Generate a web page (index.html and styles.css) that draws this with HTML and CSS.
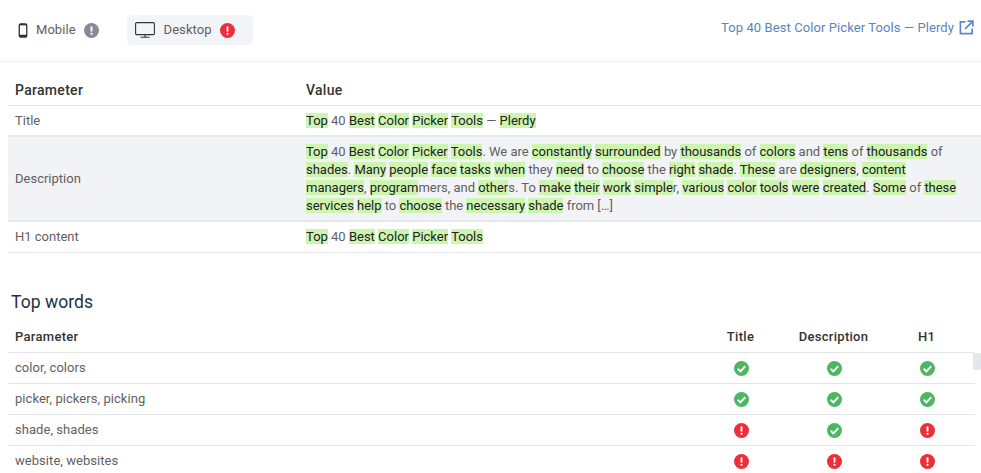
FILE: index.html
```html
<!DOCTYPE html>
<html lang="en">

<head>
    <meta charset="UTF-8">
    <title>Top words</title>
    <link rel="stylesheet" href="styles.css">
</head>

<body>
    <svg class="defs">
        <symbol id="ok" viewBox="0 0 16 16">
            <circle cx="8" cy="8" r="8" fill="#4cb662"></circle>
            <path d="M4 8.3l2.8 2.7L12 5.6" fill="none" stroke="#fff" stroke-width="2"></path>
        </symbol>
        <symbol id="bad" viewBox="0 0 16 16">
            <circle cx="8" cy="8" r="8" fill="#ee2e3b"></circle>
            <rect x="7" y="3.5" width="2" height="5.8" rx="1" fill="#fff"></rect>
            <circle cx="8" cy="11.5" r="1.2" fill="#fff"></circle>
        </symbol>
        <symbol id="warn" viewBox="0 0 16 16">
            <circle cx="8" cy="8" r="8" fill="#868a96"></circle>
            <rect x="7" y="3.5" width="2" height="5.8" rx="1" fill="#fff"></rect>
            <circle cx="8" cy="11.5" r="1.2" fill="#fff"></circle>
        </symbol>
    </svg>

    <div class="tabs">
        <div class="tab">
            <svg class="phone" viewBox="0 0 10 16">
                <rect x="1" y="1" width="8" height="14" rx="1.5" fill="none" stroke="#333" stroke-width="1.4"></rect>
                <rect x="1" y="12.5" width="8" height="2.5" fill="#333"></rect>
                <rect x="1" y="1" width="8" height="1.5" fill="#333"></rect>
            </svg>
            <span>Mobile</span>
            <svg class="status"><use href="#warn"></use></svg>
        </div>
        <div class="tab active">
            <svg class="monitor" viewBox="0 0 20 16">
                <rect x="0.6" y="0.6" width="18.8" height="12" rx="1.2" fill="none" stroke="#333" stroke-width="1.1"></rect>
                <path d="M10 12.6v2.4M5.5 15.3h9" fill="none" stroke="#333" stroke-width="1.1"></path>
            </svg>
            <span>Desktop</span>
            <svg class="status"><use href="#bad"></use></svg>
        </div>
        <a class="source" href="#">
            Top 40 Best Color Picker Tools — Plerdy
            <svg class="ext" viewBox="0 0 16 16">
                <path d="M7 2H1.5v12.5H14V9" fill="none" stroke="#5b8ac9" stroke-width="1.8"></path>
                <path d="M6.5 9.5L14 2M9 1.2h5.8V7" fill="none" stroke="#5b8ac9" stroke-width="1.8"></path>
            </svg>
        </a>
    </div>

    <table class="meta">
        <tr>
            <th class="param">Parameter</th>
            <th>Value</th>
        </tr>
        <tr class="title-row">
            <td>Title</td>
            <td><mark>Top</mark> 40 <mark>Best</mark> <mark>Color</mark> <mark>Picker</mark> <mark>Tools</mark> — <mark>Plerdy</mark></td>
        </tr>
        <tr class="shaded">
            <td>Description</td>
            <td class="desc"><mark>Top</mark> 40 <mark>Best</mark> <mark>Color</mark> <mark>Picker</mark> <mark>Tools</mark>. We are <mark>constantly</mark> <mark>surrounded</mark> by <mark>thousands</mark> of <mark>colors</mark> and <mark>tens</mark> of <mark>thousands</mark> of <mark>shades</mark>. <mark>Many</mark> <mark>people</mark> <mark>face</mark> <mark>tasks</mark> <mark>when</mark> they <mark>need</mark> to <mark>choose</mark> the <mark>right</mark> <mark>shade</mark>. <mark>These</mark> are <mark>designers</mark>, <mark>content</mark> <mark>managers</mark>, <mark>program</mark>mers, and <mark>other</mark>s. To <mark>make</mark> <mark>their</mark> <mark>work</mark> <mark>simple</mark>r, <mark>various</mark> <mark>color</mark> <mark>tools</mark> <mark>were</mark> <mark>created</mark>. <mark>Some</mark> of <mark>these</mark> <mark>services</mark> <mark>help</mark> to <mark>choose</mark> the <mark>necessary</mark> <mark>shade</mark> from […]</td>
        </tr>
        <tr>
            <td>H1 content</td>
            <td><mark>Top</mark> 40 <mark>Best</mark> <mark>Color</mark> <mark>Picker</mark> <mark>Tools</mark></td>
        </tr>
    </table>

    <h2 class="heading">Top words</h2>

    <div class="words-wrap">
        <table class="words">
            <tr>
                <th>Parameter</th>
                <th class="mark-col">Title</th>
                <th class="mark-col">Description</th>
                <th class="mark-col">H1</th>
            </tr>
            <tr>
                <td>color, colors</td>
                <td class="mark-col"><svg class="status"><use href="#ok"></use></svg></td>
                <td class="mark-col"><svg class="status"><use href="#ok"></use></svg></td>
                <td class="mark-col"><svg class="status"><use href="#ok"></use></svg></td>
            </tr>
            <tr>
                <td>picker, pickers, picking</td>
                <td class="mark-col"><svg class="status"><use href="#ok"></use></svg></td>
                <td class="mark-col"><svg class="status"><use href="#ok"></use></svg></td>
                <td class="mark-col"><svg class="status"><use href="#ok"></use></svg></td>
            </tr>
            <tr>
                <td>shade, shades</td>
                <td class="mark-col"><svg class="status"><use href="#bad"></use></svg></td>
                <td class="mark-col"><svg class="status"><use href="#ok"></use></svg></td>
                <td class="mark-col"><svg class="status"><use href="#bad"></use></svg></td>
            </tr>
            <tr>
                <td>website, websites</td>
                <td class="mark-col"><svg class="status"><use href="#bad"></use></svg></td>
                <td class="mark-col"><svg class="status"><use href="#bad"></use></svg></td>
                <td class="mark-col"><svg class="status"><use href="#bad"></use></svg></td>
            </tr>
        </table>
        <div class="thumb"></div>
    </div>
</body>

</html>
```

FILE: styles.css
```css
* {
    margin: 0;
    padding: 0;
    box-sizing: border-box;
    font-family: Roboto, sans-serif;
}

html,
body {
    height: 100%;
    overflow: hidden;
}

body {
    background: #fff;
    color: #5f5f5f;
    font-size: 13px;
    letter-spacing: 0.05px;
}

.defs {
    display: none;
}

.tabs {
    height: 62px;
    display: flex;
    align-items: center;
    padding: 0 7px 1px 8px;
    border-bottom: 1px solid #f2f3f5;
}

.tab {
    height: 30px;
    display: flex;
    align-items: center;
    padding: 0 10px;
    margin-right: 18px;
    border-radius: 5px;
}

.tab span {
    margin-bottom: 2px;
}

.tab.active {
    background: #f3f4f7;
    padding: 0 18px 0 8px;
}

.phone {
    width: 10px;
    height: 15px;
    margin-right: 8px;
}

.monitor {
    width: 20px;
    height: 16px;
    margin-right: 9px;
}

.status {
    width: 15px;
    height: 15px;
    display: block;
}

.tab .status {
    margin-left: 8px;
}

.source {
    margin-left: auto;
    margin-bottom: 5px;
    display: flex;
    align-items: center;
    color: #5b84bd;
    letter-spacing: 0.09px;
    text-decoration: none;
}

.ext {
    width: 15px;
    height: 15px;
    margin-left: 5px;
}

table {
    border-collapse: collapse;
    table-layout: fixed;
}

.meta {
    width: 973px;
    margin-left: 8px;
    letter-spacing: 0;
}

th {
    height: 43px;
    padding: 13px 0 0 7px;
    text-align: left;
    font-weight: 500;
    font-size: 14px;
    letter-spacing: 0.3px;
    color: #333;
    border-bottom: 1px solid #e5e6e9;
}

td {
    height: 31px;
    padding: 0 7px;
    border-bottom: 1px solid #e5e6e9;
    line-height: 18px;
}

.param {
    width: 291px;
}

.title-row td {
    padding-top: 2px;
}

.shaded td {
    background: #f2f3f6;
    border-top: 2px solid #e8e9ec;
    border-bottom: 2px solid #e8e9ec;
    height: 85px;
    padding-top: 1px;
}

.shaded .desc {
    padding-right: 14px;
    letter-spacing: -0.02px;
}

mark {
    background: #cdf5b0;
    color: #222;
}

.heading {
    margin: 39px 0 1px 11px;
    font-size: 17.5px;
    font-weight: 400;
    color: #1f3044;
    line-height: 20px;
}

.words-wrap {
    position: relative;
}

.words {
    width: 967px;
    margin-left: 8px;
    letter-spacing: 0.05px;
}

.words th {
    height: 40px;
    padding-top: 9px;
    font-size: 13px;
}

.words .mark-col {
    width: 93px;
    padding: 0 2px 0 0;
    text-align: center;
}

.words th.mark-col {
    padding: 9px 4px 0 0;
}

.words td .status {
    margin: 0 auto;
}

.thumb {
    position: absolute;
    top: 40px;
    right: 0;
    width: 8px;
    height: 17px;
    border-radius: 2px;
    background: #e4e6ec;
}
```
